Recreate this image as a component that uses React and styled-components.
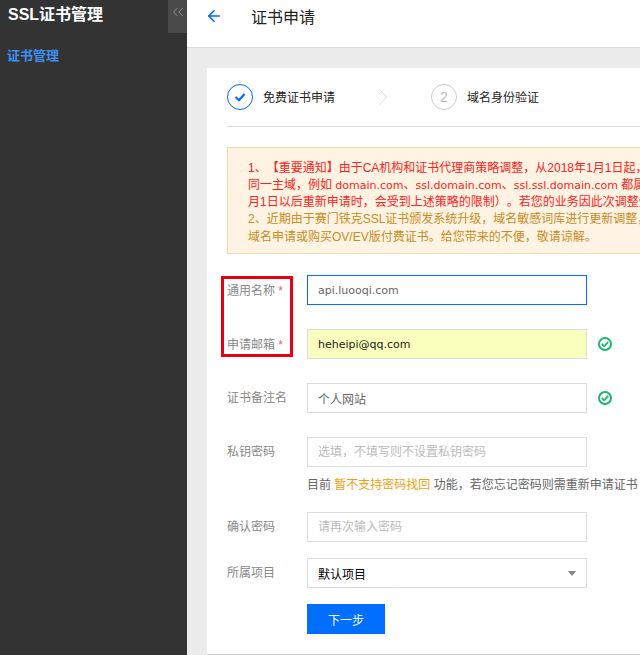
import React from 'react';
import styled, { createGlobalStyle } from 'styled-components';
import { ArrowLeft, ChevronsLeft } from 'lucide-react';

const GlobalStyle = createGlobalStyle`
	html, body {
		margin: 0;
		height: 100%;
		overflow: hidden;
	}
	body {
		font-family: "Liberation Sans", "Noto Sans CJK SC", sans-serif;
		font-size: 12px;
		text-spacing-trim: space-all;
	}
	* {
		box-sizing: border-box;
	}
`;

const Page = styled.div`
	display: flex;
	width: 640px;
	height: 655px;
	overflow: hidden;
`;

const Sidebar = styled.aside`
	flex: 0 0 187px;
	background: #333;
`;

const SideHead = styled.div`
	display: flex;
	justify-content: space-between;
	height: 33px;
	margin-bottom: 13px;
`;

const SideTitle = styled.div`
	padding: 5px 0 0 8px;
	font-size: 16px;
	line-height: 20px;
	font-weight: bold;
	color: #fff;
`;

const Collapse = styled.div`
	display: flex;
	justify-content: center;
	width: 19px;
	padding-top: 3px;
	background: #4a4a4a;
	color: #aaa;
`;

const SideLink = styled.div`
	padding-left: 7px;
	font-size: 13px;
	line-height: 20px;
	font-weight: bold;
	color: #3d8ff0;
`;

const Main = styled.main`
	flex: 1;
	min-width: 0;
	background: #ececec;
	overflow: hidden;
`;

const TopBar = styled.header`
	display: flex;
	align-items: center;
	height: 48px;
	padding: 0 0 15px 18px;
	background: #fff;
	border-bottom: 1px solid #ddd;
`;

const TopTitle = styled.h1`
	margin: 0 0 0 28px;
	font-size: 16px;
	font-weight: normal;
	color: #222;
`;

const Card = styled.section`
	width: 620px;
	height: 587px;
	margin: 20px 0 0 20px;
	padding: 0 0 0 20px;
	background: #fff;
	border-bottom: 1px solid #ccc;
`;

const Steps = styled.div`
	display: flex;
	align-items: center;
	height: 59px;
	border-bottom: 1px solid #ddd;
`;

const StepCircle = styled.div`
	display: flex;
	align-items: center;
	justify-content: center;
	width: 26px;
	height: 26px;
	margin-right: 10px;
	border-radius: 50%;
	border: 1px solid ${({ $done }) => ($done ? '#006eff' : '#ccc')};
	color: ${({ $done }) => ($done ? '#006eff' : '#bbb')};
	font-size: 14px;
`;

const StepText = styled.span`
	margin-top: -2px;
	color: #222;
`;

const StepArrow = styled.svg`
	margin: 0 43px;
`;

const Notice = styled.div`
	width: 600px;
	height: 107px;
	margin: 20px 0 21px;
	padding: 11.5px 0 0 20px;
	background: #fff4e3;
	border: 1px solid #f6d9a8;
	line-height: 17.3px;
	white-space: nowrap;
	overflow: hidden;
`;

const NoticeLine = styled.div`
	color: ${({ $red }) => ($red ? '#f22' : '#c98b22')};
`;

const Domain = styled.span`
	font-family: "DejaVu Sans", "Noto Sans CJK SC", sans-serif;
	font-size: 11px;
`;

const Row = styled.div`
	display: flex;
	align-items: center;
	height: 30px;
	margin-bottom: ${({ $gap }) => $gap}px;
`;

const Label = styled.label`
	flex: 0 0 80px;
	color: #888;
	margin-top: ${({ $required }) => ($required ? '-2px' : '-4px')};
`;

const Star = styled.span`
	color: #d9696f;
`;

const Input = styled.input`
	width: 280px;
	height: 30px;
	padding: 0 10px;
	font-family: "DejaVu Sans", "Noto Sans CJK SC", sans-serif;
	font-size: ${({ $latin }) => ($latin ? '11px' : '12px')};
	color: ${({ $filled }) => ($filled ? '#222' : '#666')};
	background: ${({ $filled }) => ($filled ? '#faffbd' : '#fff')};
	border: 1px solid ${({ $focus }) => ($focus ? '#006eff' : '#ddd')};
	outline: none;

	&::placeholder {
		color: #bbb;
	}
`;

const SelectBox = styled.div`
	display: flex;
	align-items: center;
	justify-content: space-between;
	width: 280px;
	height: 30px;
	padding: 0 10px;
	color: #000;
	border: 1px solid #ddd;
`;

const Caret = styled.span`
	width: 0;
	height: 0;
	border-left: 4px solid transparent;
	border-right: 4px solid transparent;
	border-top: 5px solid #888;
`;

const Valid = styled.svg`
	margin-left: 10px;
`;

const Hint = styled.div`
	height: 45px;
	padding: 11px 0 0 80px;
	line-height: 14px;
	color: #666;
	white-space: nowrap;
`;

const HintMark = styled.span`
	color: #f59e0b;
`;

const Button = styled.button`
	display: block;
	width: 78px;
	height: 30px;
	margin-left: 80px;
	font: inherit;
	color: #fff;
	background: #006eff;
	border: none;
`;

const Form = styled.form`
	position: relative;
`;

const Highlight = styled.div`
	position: absolute;
	top: 1px;
	left: -6px;
	width: 72px;
	height: 81px;
	border: 3px solid #e60012;
	pointer-events: none;
`;

const ValidIcon = () => (
	<Valid width="16" height="16" viewBox="0 0 16 16" fill="none" stroke="#1db56f" strokeWidth="2">
		<circle cx="8" cy="8" r="6" />
		<path d="M4.8 8 7.2 10.3 11.2 5.9" strokeWidth="1.8" />
	</Valid>
);

function App() {
	return (
		<Page>
			<GlobalStyle />
			<Sidebar>
				<SideHead>
					<SideTitle>SSL证书管理</SideTitle>
					<Collapse><ChevronsLeft size={18} strokeWidth={1} /></Collapse>
				</SideHead>
				<SideLink>证书管理</SideLink>
			</Sidebar>
			<Main>
				<TopBar>
					<ArrowLeft size={18} color="#006eff" strokeWidth={2.2} />
					<TopTitle>证书申请</TopTitle>
				</TopBar>
				<Card>
					<Steps>
						<StepCircle $done>
							<svg width="14" height="14" viewBox="0 0 14 14" fill="none" stroke="currentColor" strokeWidth="2.2">
								<path d="M2.5 7 6 10.2 11.5 4" />
							</svg>
						</StepCircle>
						<StepText>免费证书申请</StepText>
						<StepArrow width="10" height="18" viewBox="0 0 10 18" fill="none" stroke="#ddd" strokeWidth="1">
							<path d="M1 1 9 9 1 17" />
						</StepArrow>
						<StepCircle>2</StepCircle>
						<StepText>域名身份验证</StepText>
					</Steps>
					<Notice>
						<NoticeLine $red>1、【重要通知】由于CA机构和证书代理商策略调整，从2018年1月1日起，</NoticeLine>
						<NoticeLine $red>同一主域，例如 <Domain>domain.com</Domain>、<Domain>ssl.domain.com</Domain>、<Domain>ssl.ssl.domain.com</Domain> 都属于</NoticeLine>
						<NoticeLine $red>月1日以后重新申请时，会受到上述策略的限制）。若您的业务因此次调整受到</NoticeLine>
						<NoticeLine>2、近期由于赛门铁克SSL证书颁发系统升级，域名敏感词库进行更新调整，</NoticeLine>
						<NoticeLine>域名申请或购买OV/EV版付费证书。给您带来的不便，敬请谅解。</NoticeLine>
					</Notice>
					<Form>
						<Row $gap={24}>
							<Label $required>通用名称 <Star>*</Star></Label>
							<Input $focus $latin defaultValue="api.luooqi.com" />
						</Row>
						<Row $gap={24}>
							<Label $required>申请邮箱 <Star>*</Star></Label>
							<Input $filled $latin defaultValue="heheipi@qq.com" />
							<ValidIcon />
						</Row>
						<Row $gap={24}>
							<Label>证书备注名</Label>
							<Input defaultValue="个人网站" />
							<ValidIcon />
						</Row>
						<Row $gap={0}>
							<Label>私钥密码</Label>
							<Input placeholder="选填，不填写则不设置私钥密码" />
						</Row>
						<Hint>目前 <HintMark>暂不支持密码找回</HintMark> 功能，若您忘记密码则需重新申请证书</Hint>
						<Row $gap={16}>
							<Label>确认密码</Label>
							<Input placeholder="请再次输入密码" />
						</Row>
						<Row $gap={16}>
							<Label>所属项目</Label>
							<SelectBox>默认项目<Caret /></SelectBox>
						</Row>
						<Button type="button">下一步</Button>
						<Highlight />
					</Form>
				</Card>
			</Main>
		</Page>
	);
}

export default App;
